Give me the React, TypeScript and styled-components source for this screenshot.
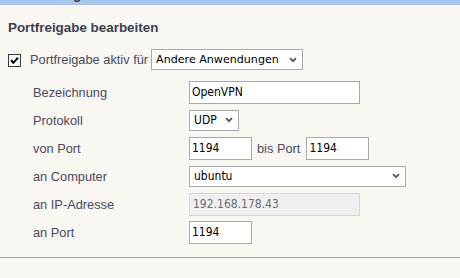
import React from "react";
import styled, { createGlobalStyle } from "styled-components";

const Global = createGlobalStyle`
  html, body { margin: 0; padding: 0; background: #f8f7f2; }
  body { font-family: "Liberation Sans", Arial, sans-serif; }
`;

const Page = styled.div`
  width: 460px;
  height: 278px;
  overflow: hidden;
  background: #f8f7f2;
  display: flex;
  flex-direction: column;
`;

const TopBar = styled.div`
  height: 5px;
  flex: none;
  background: #a8c8e8;
  overflow: hidden;
  display: flex;
  align-items: flex-end;
  padding: 0 0 3px 27px;
  box-sizing: border-box;
`;

const TopBarTitle = styled.span`
  font: bold 13px/15px "Liberation Sans", Arial, sans-serif;
  color: #333340;
`;

const Section = styled.section`
  padding: 0 8px;
  flex: 1;
`;

const Title = styled.h2`
  margin: 15px 0 0;
  font: bold 13.4px/16px "Liberation Sans", Arial, sans-serif;
  color: #3e3e50;
`;

const CheckRow = styled.label`
  margin-top: 13px;
  height: 21px;
  display: flex;
  align-items: center;
  font-size: 12.8px;
  color: #4a4a5e;
`;

const CheckBox = styled.span`
  width: 13px;
  height: 13px;
  box-sizing: border-box;
  border: 1px solid #3a3a3a;
  background: #fff;
  display: flex;
  align-items: center;
  justify-content: center;
  margin: 1px 9px 0 0;
`;

const CheckText = styled.span`
  margin-right: 3px;
`;

const SelectBox = styled.div<{ $w: number; $wide?: boolean }>`
  width: ${(p) => p.$w}px;
  height: 21px;
  flex: none;
  box-sizing: border-box;
  border: 1px solid #a9a9a9;
  background: #fff;
  display: flex;
  align-items: center;
  padding: 0 5px 0 4px;
  color: #000;
  font-family: ${(p) =>
    p.$wide
      ? `"DejaVu Sans", Verdana, sans-serif`
      : `"DejaVu Sans Condensed", "DejaVu Sans", sans-serif`};
  font-stretch: ${(p) => (p.$wide ? "normal" : "condensed")};
  font-size: ${(p) => (p.$wide ? 11.1 : 12)}px;
`;

const SelectValue = styled.span`
  flex: 1;
  min-width: 0;
  overflow: hidden;
  white-space: nowrap;
`;

const Chevron = () => (
  <svg width="8" height="6" viewBox="0 0 8 6">
    <path d="M1 1.2 L4 4.2 L7 1.2" fill="none" stroke="#5a5a5a" strokeWidth="1.9" />
  </svg>
);

const Select = ({ value, w, wide }: { value: string; w: number; wide?: boolean }) => (
  <SelectBox $w={w} $wide={wide}>
    <SelectValue>{value}</SelectValue>
    <Chevron />
  </SelectBox>
);

const Form = styled.div`
  margin-top: 8px;
  padding-left: 25px;
  display: grid;
  grid-template-columns: 156px 1fr;
  grid-auto-rows: 28px;
  align-items: center;
`;

const Label = styled.span`
  font-size: 12.8px;
  color: #4a4a5e;
`;

const Field = styled.input<{ $w: number }>`
  width: ${(p) => p.$w}px;
  height: 23px;
  box-sizing: border-box;
  margin: 0;
  border: 1px solid #a9a9a9;
  background: #fff;
  padding: 0 2px;
  font-family: "DejaVu Sans Condensed", "DejaVu Sans", sans-serif;
  font-stretch: condensed;
  font-size: 12px;
  color: #000;
  outline: none;
  &:disabled {
    background: #efefef;
    border-color: #d6d6d6;
    color: #6e6e6e;
    padding-left: 3px;
  }
`;

const Inline = styled.div`
  display: flex;
  align-items: center;
`;

const Between = styled.span`
  font-size: 12.8px;
  color: #4a4a5e;
  margin: 0 6px 0 5px;
`;

const Divider = styled.hr`
  margin: 0;
  border: 0;
  height: 1px;
  background: #9da39f;
  flex: none;
`;

const Bottom = styled.div`
  height: 20px;
  flex: none;
`;

export default function App() {
  return (
    <Page>
      <Global />
      <TopBar>
        <TopBarTitle>Portfreigabe</TopBarTitle>
      </TopBar>
      <Section>
        <Title>Portfreigabe bearbeiten</Title>
        <CheckRow>
          <CheckBox>
            <svg width="11" height="11" viewBox="0 0 11 11">
              <path d="M2 5.3 L4.4 7.8 L9 2.6" fill="none" stroke="#000" strokeWidth="2" />
            </svg>
          </CheckBox>
          <CheckText>Portfreigabe aktiv für</CheckText>
          <Select value="Andere Anwendungen" w={152} wide />
        </CheckRow>
        <Form>
          <Label>Bezeichnung</Label>
          <Field $w={171} defaultValue="OpenVPN" />
          <Label>Protokoll</Label>
          <Select value="UDP" w={50} />
          <Label>von Port</Label>
          <Inline>
            <Field $w={63} defaultValue="1194" />
            <Between>bis Port</Between>
            <Field $w={63} defaultValue="1194" />
          </Inline>
          <Label>an Computer</Label>
          <Select value="ubuntu" w={217} />
          <Label>an IP-Adresse</Label>
          <Field $w={171} defaultValue="192.168.178.43" disabled />
          <Label>an Port</Label>
          <Field $w={63} defaultValue="1194" />
        </Form>
      </Section>
      <Divider />
      <Bottom />
    </Page>
  );
}
